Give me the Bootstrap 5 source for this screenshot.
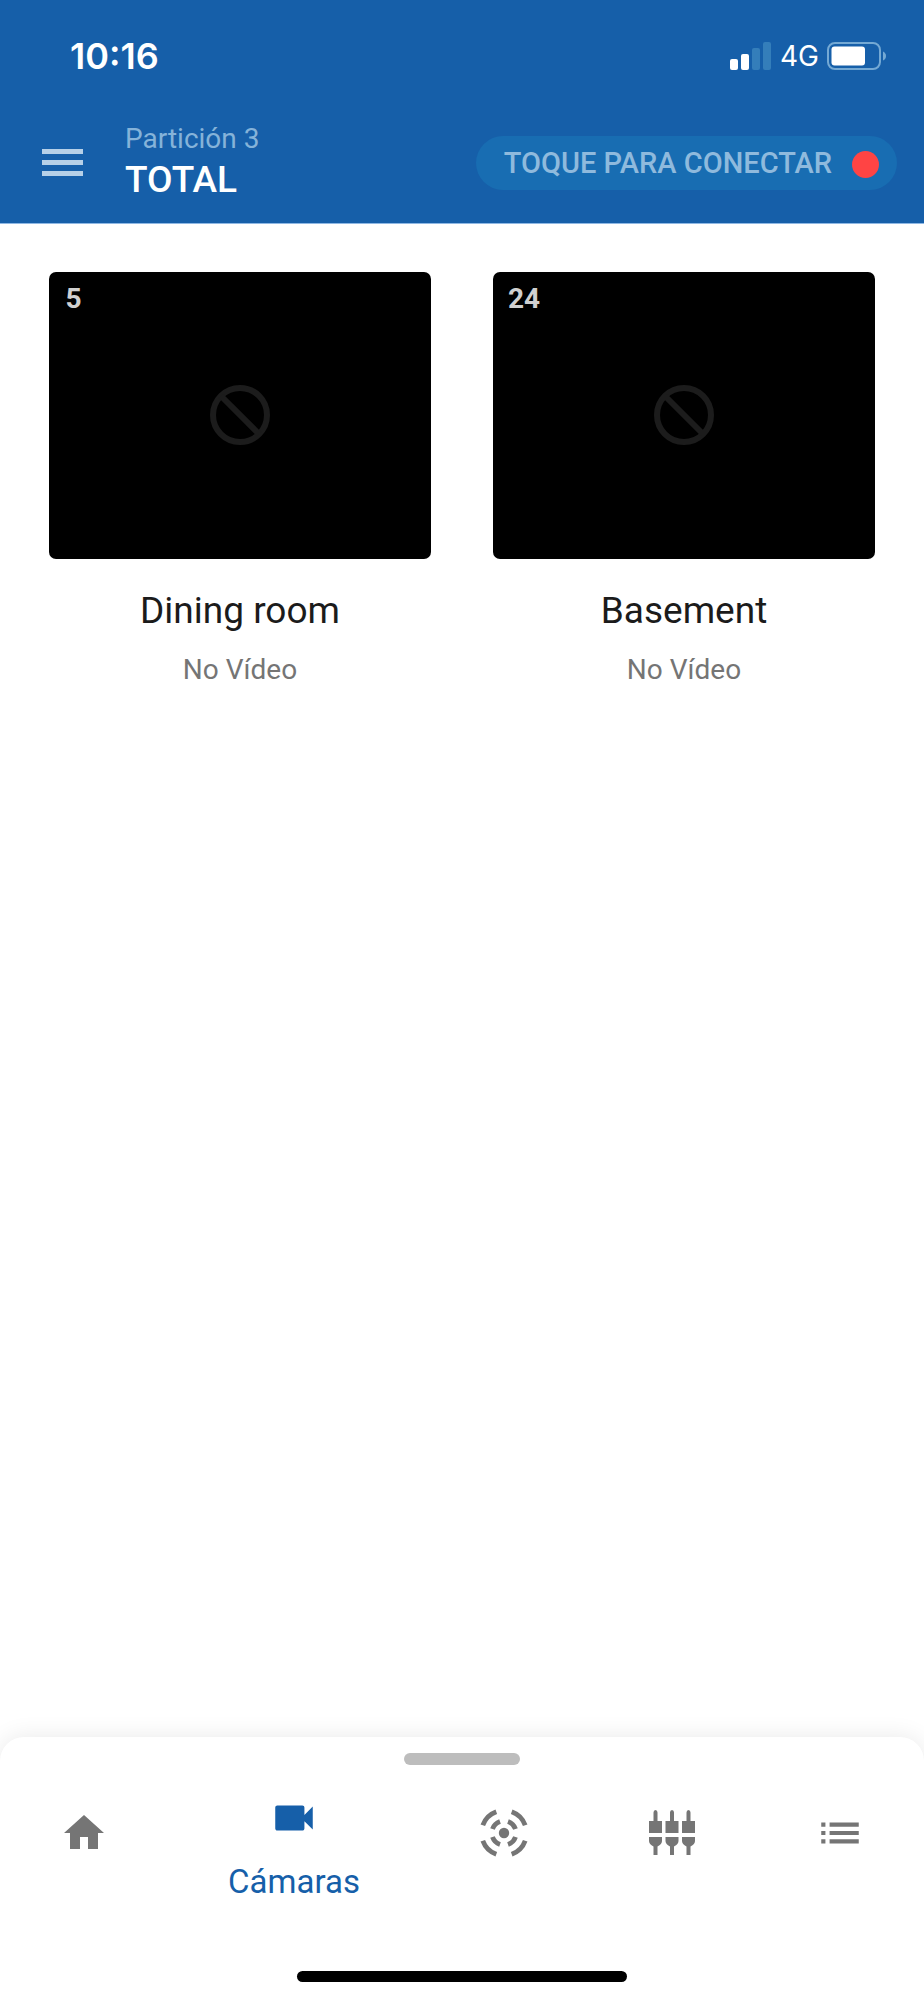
<!DOCTYPE html>
<html lang="es">
<head>
<meta charset="utf-8">
<meta name="viewport" content="width=device-width, initial-scale=1">
<title>Cámaras</title>
<link href="https://cdn.jsdelivr.net/npm/bootstrap@5.3.0/dist/css/bootstrap.min.css" rel="stylesheet">
<style>
  :root { --brand: #165fa9; --muted-icon: #757575; }
  body { font-family: Roboto, "Liberation Sans", sans-serif; background: #fff; color: #1b1b1b; }
  svg { display: block; }
  .app-header { background: var(--brand); border-bottom: 1px solid #8fb8e4; }
  .status-bar { height: 112px; padding: 0 37px 0 70px; font-family: Inter, "Liberation Sans", sans-serif; }
  .clock { font-size: 36px; line-height: 40px; }
  .network { font-size: 28px; line-height: 32px; }
  .title-bar { height: 111px; padding: 0 27px 10px 42px; }
  .menu-btn { margin-right: 42px; }
  .partition { font-size: 28px; line-height: 34px; color: #85b3d9; }
  .mode-name { font-size: 37px; line-height: 48px; }
  .pill { height: 54px; padding: 3px 18px 0 28px; gap: 20px; background: #186db2; color: #8fbadd; font-size: 29px; font-weight: 500; }
  .pill:hover { background: #1b74bb; color: #a8cbe8; }
  .dot { width: 27px; height: 27px; background: #ff4444; }
  .camera-grid { padding: 48px 49px; }
  .camera-grid .row { --bs-gutter-x: 62px; }
  .preview { aspect-ratio: 4 / 3; border-radius: 7px; background: #000; color: #1c1c1c; }
  .cam-number { min-width: 49px; padding: 10px 15px; font-size: 28px; line-height: 34px; color: #d0d0d0; }
  .cam-name { font-size: 37px; line-height: 44px; margin-top: 30px; color: #1b1b1b; }
  .cam-state { font-size: 28px; line-height: 34px; margin-top: 20px; color: #757575; }
  .sheet { border-radius: 24px 24px 0 0; box-shadow: 0 0 24px rgba(0,0,0,.09); background: #fff; padding: 16px 0 18px; }
  .handle { width: 116px; height: 12px; background: #bdbdbd; }
  .tabs { height: 136px; }
  .tab { flex: 2 1 0; color: var(--muted-icon); }
  .tab.active { flex-grow: 3; color: var(--brand); padding-top: 28px; }
  .tab-label { font-size: 33px; line-height: 40px; margin-top: 19px; }
  .home-bar { width: 330px; height: 11px; background: #000; margin-top: 70px; }
</style>
</head>
<body class="d-flex flex-column min-vh-100">
<header class="app-header text-white">
  <div class="status-bar d-flex align-items-center justify-content-between">
    <span class="clock fw-semibold">10:16</span>
    <div class="d-flex align-items-center gap-2">
      <svg width="42" height="28" viewBox="0 0 42 28" fill="#fff" aria-label="Señal"><rect y="17" width="8" height="11" rx="2"/><rect x="11" y="12" width="8" height="16" rx="2"/><g fill="#347eba"><rect x="22" y="6" width="8" height="22" rx="2"/><rect x="33" width="8" height="28" rx="2"/></g></svg>
      <span class="network">4G</span>
      <svg width="60" height="28" viewBox="0 0 60 28" aria-label="Batería"><rect x="1" y="1" width="52" height="26" rx="7" fill="none" stroke="#74a9d4" stroke-width="2"/><rect x="4.500" y="4.500" width="33.500" height="19" rx="3" fill="#fff"/><path d="M56 9.500q3 1.500 3 4.500t-3 4.500z" fill="#74a9d4"/></svg>
    </div>
  </div>
  <div class="title-bar d-flex align-items-center">
    <button type="button" class="menu-btn btn p-0 border-0" aria-label="Menú"><svg width="41" height="28" viewBox="0 0 41 28" fill="#b6d0e8"><path d="M0 0h41v5H0zM0 11h41v5H0zM0 22h41v5H0z"/></svg></button>
    <div>
      <div class="partition">Partición 3</div>
      <h1 class="mode-name fw-medium mb-0">TOTAL</h1>
    </div>
    <button type="button" class="pill btn border-0 rounded-pill d-flex align-items-center ms-auto text-nowrap">TOQUE PARA CONECTAR <span class="dot rounded-circle"></span></button>
  </div>
</header>

<main class="flex-grow-1">
  <div class="camera-grid"><div class="row">
    <section class="col-6 text-center">
      <div class="preview position-relative d-flex align-items-center justify-content-center">
        <span class="cam-number fw-bold position-absolute top-0 start-0">5</span>
        <svg width="60" height="60" viewBox="0 0 60 60" fill="none" stroke="currentColor" stroke-width="6"><circle cx="30" cy="30" r="27"/><path d="M11 11l38 38"/></svg>
      </div>
      <h2 class="cam-name fw-normal mb-0">Dining room</h2>
      <p class="cam-state mb-0">No Vídeo</p>
    </section>
    <section class="col-6 text-center">
      <div class="preview position-relative d-flex align-items-center justify-content-center">
        <span class="cam-number fw-bold position-absolute top-0 start-0">24</span>
        <svg width="60" height="60" viewBox="0 0 60 60" fill="none" stroke="currentColor" stroke-width="6"><circle cx="30" cy="30" r="27"/><path d="M11 11l38 38"/></svg>
      </div>
      <h2 class="cam-name fw-normal mb-0">Basement</h2>
      <p class="cam-state mb-0">No Vídeo</p>
    </section>
  </div></div>
</main>

<footer class="sheet">
  <div class="handle rounded-pill mx-auto"></div>
  <nav class="tabs d-flex align-items-center" aria-label="Principal">
    <a href="#inicio" class="tab d-flex justify-content-center" aria-label="Inicio"><svg width="48" height="48" viewBox="0 0 24 24" fill="currentColor"><path d="M10 20v-6h4v6h5v-8h3L12 3 2 12h3v8z"/></svg></a>
    <a href="#camaras" class="tab active d-flex flex-column align-items-center text-decoration-none" aria-current="page"><svg width="50" height="50" viewBox="0 0 24 24" fill="currentColor"><path d="M17 10.500V7c0-.55-.45-1-1-1H4c-.55 0-1 .45-1 1v10c0 .55.45 1 1 1h12c.55 0 1-.45 1-1v-3.500l4 4v-11z"/></svg><span class="tab-label">Cámaras</span></a>
    <a href="#sensores" class="tab d-flex justify-content-center" aria-label="Sensores"><svg width="50" height="50" viewBox="-25 -25 50 50" fill="none" stroke="currentColor" stroke-width="4.800"><circle r="5.200" fill="currentColor" stroke="none"/><g id="arcs"><path d="M7.700-21.200A22.500 22.500 0 0 1 21.200-7.700"/><path d="M4-11.500A12.200 12.200 0 0 1 11.500-4"/></g><use href="#arcs" transform="rotate(90)"/><use href="#arcs" transform="rotate(180)"/><use href="#arcs" transform="rotate(270)"/></svg></a>
    <a href="#salidas" class="tab d-flex justify-content-center" aria-label="Salidas"><svg width="46" height="46" viewBox="0 0 46 46" fill="currentColor"><g id="plug"><path d="M0 11h4.500V2.500q0-2.500 2-2.500t2 2.500V11H13v12H0zM0 27h13v4q0 3-4.500 5.600V45h-4v-8.400Q0 34 0 31z"/></g><use href="#plug" x="16.500"/><use href="#plug" x="33"/></svg></a>
    <a href="#eventos" class="tab d-flex justify-content-center" aria-label="Eventos"><svg width="50" height="50" viewBox="0 0 24 24" fill="currentColor"><path d="M3 13h2v-2H3zm0 4h2v-2H3zm0-8h2V7H3zm4 4h14v-2H7zm0 4h14v-2H7zM7 7v2h14V7z"/></svg></a>
  </nav>
  <div class="home-bar rounded-pill mx-auto"></div>
</footer>
<script src="https://cdn.jsdelivr.net/npm/bootstrap@5.3.0/dist/js/bootstrap.bundle.min.js"></script>
</body>
</html>
